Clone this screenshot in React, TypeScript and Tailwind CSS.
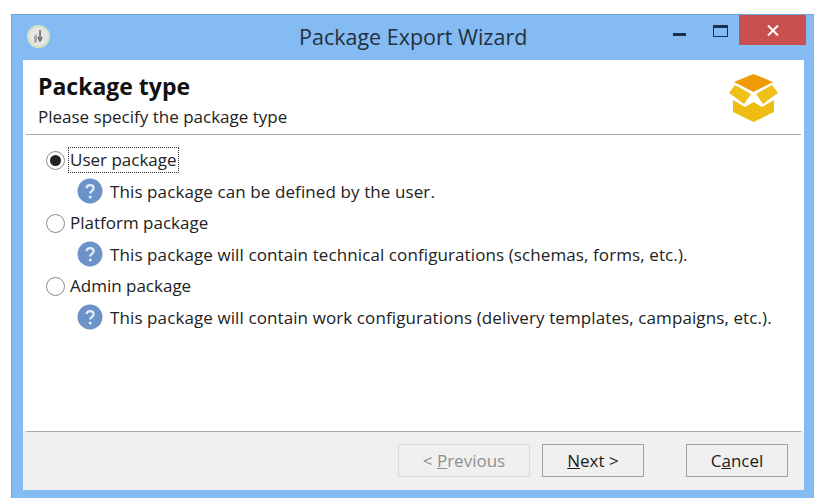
import React from "react";

const options = [
  { label: "User package", help: "This package can be defined by the user.", checked: true },
  { label: "Platform package", help: "This package will contain technical configurations (schemas, forms, etc.).", checked: false },
  { label: "Admin package", help: "This package will contain work configurations (delivery templates, campaigns, etc.).", checked: false },
];

const HelpIcon = () => (
  <svg width="26" height="26" viewBox="0 0 26 26" className="shrink-0">
    <circle cx="13" cy="13" r="12.5" fill="#6b93c8" />
    <path d="M9.5 10.2c.3-2 1.7-3 3.6-3 2.1 0 3.5 1.2 3.5 3 0 2.6-3.4 2.7-3.4 5.2" fill="none" stroke="#e4edf7" strokeWidth="2.2" />
    <circle cx="13.2" cy="19" r="1.5" fill="#e4edf7" />
  </svg>
);

const Radio = ({ checked }: { checked: boolean }) => (
  <span className="mt-[2px] flex h-[19px] w-[19px] shrink-0 items-center justify-center rounded-full border border-[#8a8a8a] bg-white">
    {checked && <span className="h-[11px] w-[11px] rounded-full bg-[#222222]" />}
  </span>
);

const BoxLogo = () => (
  <svg width="50" height="50" viewBox="0 0 50 50">
    <path d="M24.5 1 L44 9 L24.5 19 L5 9 Z" fill="#f09a05" />
    <path d="M6 12 L22 21 L15 31 L0 20 Z" fill="#f0c01a" />
    <path d="M43 12 L27 21 L34 31 L49 20 Z" fill="#f0c01a" />
    <path d="M4 27 L16 34 L24.5 29 L33 34 L45 27 L45 39 L24.5 49 L4 39 Z" fill="#edbd12" />
  </svg>
);

const WizardButton = ({ before, mnemonic, after, disabled, className }: { before?: string; mnemonic: string; after: string; disabled?: boolean; className: string }) => (
  <div
    className={`flex h-[33px] items-center justify-center border text-[17px] ${className} ${
      disabled ? "border-[#d9d9d9] text-[#8f8f8f]" : "border-[#a0a0a0] text-[#1c1c1c]"
    }`}
  >
    <span>
      {before}
      <span className="underline">{mnemonic}</span>
      {after}
    </span>
  </div>
);

export default function App() {
  return (
    <div className="h-[498px] w-[814px] overflow-hidden bg-white pl-[11px] pt-[14px] font-['Open_Sans',sans-serif]">
      <div className="flex h-[484px] w-[803px] flex-col bg-[#85bbf3] border-t border-l border-[#6fa3da]">
        {/* Title bar */}
        <div className="flex h-[45px] shrink-0 items-start">
          <div className="ml-[15px] mt-[10px] flex h-[23px] w-[23px] items-center justify-center rounded-full border-2 border-[#cfe3c4] bg-[#e6e6e6]">
            <svg width="14" height="16" viewBox="0 0 14 16">
              <path d="M2 7 L5 5 L5 13 L2 14 Z" fill="#a8a8a8" />
              <path d="M8 1 L8 9 M6 8 L8 12 L10 8" fill="none" stroke="#555555" strokeWidth="1.4" />
            </svg>
          </div>
          <div className="mt-[7px] flex-1 pl-[249px] text-[21.5px] leading-[29px] text-[#24303c]">Package Export Wizard</div>
          <div className="mt-[18px] h-[3px] w-[13px] bg-[#17324f]" />
          <div className="ml-[27px] mt-[10px] h-[12px] w-[15px] border border-t-[3px] border-[#17324f]" />
          <div className="ml-[11px] mr-[8px] flex h-[30px] w-[67px] items-center justify-center bg-[#c9504f]">
            <svg width="12" height="11" viewBox="0 0 12 11">
              <path d="M1 .5 L11 10.5 M11 .5 L1 10.5" stroke="#ffffff" strokeWidth="2" />
            </svg>
          </div>
        </div>

        {/* Content */}
        <div className="flex w-[781px] ml-[11px] flex-1 flex-col">
          <div className="flex h-[74px] shrink-0 items-start justify-between bg-white pl-[15px] pr-[25px]">
            <div className="pt-[10px]">
              <h1 className="text-[23px] font-bold leading-[32px] text-[#111111]">Package type</h1>
              <p className="mt-[3px] text-[17px] leading-[24px] text-[#222222]">Please specify the package type</p>
            </div>
            <div className="pt-[13px]">
              <BoxLogo />
            </div>
          </div>
          <div className="h-[297px] shrink-0 bg-white px-[3px]">
            <div className="border-t border-[#a8a8a8] pl-[20px] pt-[13px]">
              {options.map((o, i) => (
                <div key={o.label} className="h-[63px]">
                  <div className="flex h-[23px] items-center gap-[4px]">
                    <Radio checked={o.checked} />
                    <span className={`px-px text-[17px] leading-[24px] text-[#222222] ${i === 0 ? "outline-1 outline-dotted outline-[#333333]" : ""}`}>{o.label}</span>
                  </div>
                  <div className="ml-[31px] mt-[7px] flex h-[26px] items-center gap-[7px]">
                    <HelpIcon />
                    <span className="whitespace-nowrap pt-[2px] text-[17px] tracking-[0.1px] text-[#222222]">{o.help}</span>
                  </div>
                </div>
              ))}
            </div>
          </div>
          <div className="flex-1 bg-[#f0f0f0] px-[3px]">
            <div className="flex justify-end border-t border-[#a8a8a8] pr-[13px] pt-[12px]">
              <WizardButton before="< " mnemonic="P" after="revious" disabled className="w-[132px]" />
              <WizardButton mnemonic="N" after="ext >" className="ml-[12px] w-[102px]" />
              <WizardButton before="C" mnemonic="a" after="ncel" className="ml-[42px] w-[102px]" />
            </div>
          </div>
        </div>
        <div className="h-[8px] shrink-0" />
      </div>
    </div>
  );
}
